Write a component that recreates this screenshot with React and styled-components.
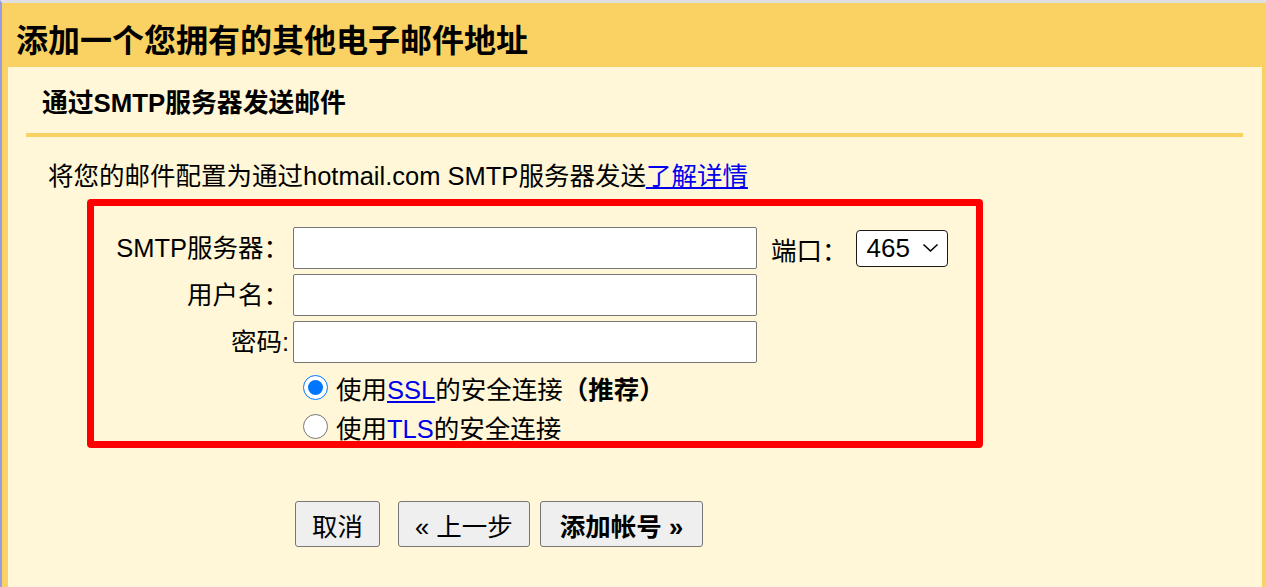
import React from 'react';
import styled, { createGlobalStyle } from 'styled-components';

const GlobalStyle = createGlobalStyle`
  html, body {
    margin: 0;
    padding: 0;
  }

  body {
    font-family: "Liberation Sans", "Noto Sans CJK SC", sans-serif;
    color: #000;
    background: #fff7d7;
  }
`;

const Page = styled.div`
  display: flex;
  min-height: 100vh;
  box-sizing: border-box;
  border-top: 3px solid #dfdfdf;
  border-left: 2px solid #9b9bdf;
`;

const Dialog = styled.div`
  flex: 1;
  display: flex;
  flex-direction: column;
  padding: 0 4px 0 6px;
  background: #fad163;
`;

const Title = styled.h1`
  margin: 0;
  height: 64px;
  box-sizing: border-box;
  display: flex;
  align-items: center;
  padding: 6px 0 0 8px;
  font-size: 32px;
  font-weight: bold;
`;

const Body = styled.div`
  flex: 1;
  padding: 0 19px 40px 18px;
  background: #fff7d7;
`;

const SubTitle = styled.h2`
  margin: 0;
  padding: 22px 0 16px 16px;
  font-size: 25.8px;
  line-height: 28px;
  font-weight: bold;
`;

const Rule = styled.div`
  height: 4px;
  background: #fad163;
`;

const Intro = styled.p`
  margin: 24px 0 0 22px;
  font-size: 25.5px;
  line-height: 30px;
`;

const Link = styled.a`
  color: #0000ee;
  text-decoration: ${(props) => (props.$plain ? 'none' : 'underline')};
  cursor: pointer;
`;

/* red frame is painted over the fields, so it sits on an ::after layer */
const Frame = styled.div`
  position: relative;
  width: 896px;
  height: 249px;
  box-sizing: border-box;
  margin: 8px 0 0 61px;
  padding: 28px 0 0 7px;

  &::after {
    content: '';
    position: absolute;
    inset: 0;
    border: 7px solid #ff0000;
    border-radius: 4px;
    pointer-events: none;
  }
`;

const FieldGrid = styled.div`
  display: grid;
  grid-template-columns: 199px 464px auto;
  row-gap: 5px;
  align-items: center;
  font-size: 25.5px;
`;

const Label = styled.label`
  padding-right: 4px;
  text-align: right;
  line-height: 30px;
  white-space: nowrap;
`;

const TextInput = styled.input`
  width: 464px;
  height: 42px;
  box-sizing: border-box;
  margin: 0;
  padding: 2px 6px;
  border: 1px solid #767676;
  border-radius: 2px;
  background: #fff;
  font: inherit;
`;

const PortCell = styled.div`
  display: flex;
  align-items: center;
  gap: 8px;
  margin-left: 14px;
`;

const Select = styled.div`
  display: flex;
  align-items: center;
  justify-content: space-between;
  width: 92px;
  height: 37px;
  box-sizing: border-box;
  padding: 0 8px 0 10px;
  border: 1.5px solid #1a1a1a;
  border-radius: 4px;
  background: #fff;
  font-size: 26px;
  line-height: 1;
`;

const RadioGroup = styled.div`
  grid-column: 2 / -1;
  display: flex;
  flex-direction: column;
`;

const RadioRow = styled.label`
  display: flex;
  align-items: center;
  gap: 8px;
  height: 39px;
  padding-left: 10px;
  white-space: nowrap;

  input {
    width: 25px;
    height: 25px;
    margin: 0;
  }

  b {
    font-weight: bold;
  }
`;

const Actions = styled.div`
  display: flex;
  margin: 53px 0 0 269px;
`;

const Button = styled.button`
  height: 46px;
  margin-left: ${(props) => props.$gap || 0}px;
  padding: 0 ${(props) => (props.$primary ? 19 : 16)}px;
  border: 1px solid #767676;
  border-radius: 3px;
  background: #efefef;
  color: #000;
  font-family: inherit;
  font-size: 25.5px;
  font-weight: ${(props) => (props.$primary ? 'bold' : 'normal')};
  cursor: pointer;
`;

const Chevron = () => (
  <svg width="17" height="10" viewBox="0 0 17 10">
    <polyline points="1.5,1.5 8.5,8 15.5,1.5" fill="none" stroke="#000" strokeWidth="1.6" />
  </svg>
);

const App = () => (
  <>
    <GlobalStyle />
    <Page>
      <Dialog>
        <Title>添加一个您拥有的其他电子邮件地址</Title>
        <Body>
          <SubTitle>通过SMTP服务器发送邮件</SubTitle>
          <Rule />
          <Intro>
            将您的邮件配置为通过hotmail.com SMTP服务器发送<Link>了解详情</Link>
          </Intro>

          <Frame>
            <FieldGrid>
              <Label>SMTP服务器：</Label>
              <TextInput type="text" />
              <PortCell>
                <span>端口：</span>
                <Select>
                  <span>465</span>
                  <Chevron />
                </Select>
              </PortCell>

              <Label>用户名：</Label>
              <TextInput type="text" />
              <span />

              <Label>密码:</Label>
              <TextInput type="password" />
              <span />

              <RadioGroup>
                <RadioRow>
                  <input type="radio" name="security" defaultChecked />
                  <span>
                    使用<Link>SSL</Link>的安全连接<b>（推荐）</b>
                  </span>
                </RadioRow>
                <RadioRow>
                  <input type="radio" name="security" />
                  <span>
                    使用<Link $plain>TLS</Link>的安全连接
                  </span>
                </RadioRow>
              </RadioGroup>
            </FieldGrid>
          </Frame>

          <Actions>
            <Button>取消</Button>
            <Button $gap={18}>« 上一步</Button>
            <Button $gap={10} $primary>
              添加帐号 »
            </Button>
          </Actions>
        </Body>
      </Dialog>
    </Page>
  </>
);

export default App;
